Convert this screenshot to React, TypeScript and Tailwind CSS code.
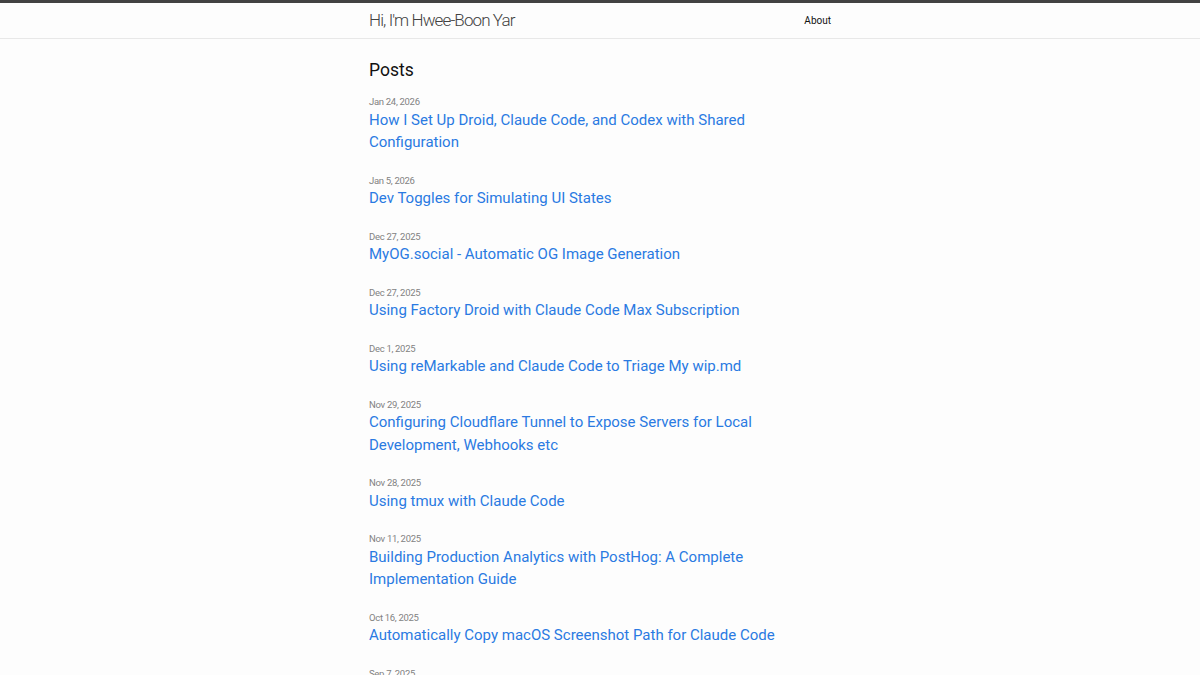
const posts = [
  { date: 'Jan 24, 2026', title: 'How I Set Up Droid, Claude Code, and Codex with Shared Configuration' },
  { date: 'Jan 5, 2026', title: 'Dev Toggles for Simulating UI States' },
  { date: 'Dec 27, 2025', title: 'MyOG.social - Automatic OG Image Generation' },
  { date: 'Dec 27, 2025', title: 'Using Factory Droid with Claude Code Max Subscription' },
  { date: 'Dec 1, 2025', title: 'Using reMarkable and Claude Code to Triage My wip.md' },
  { date: 'Nov 29, 2025', title: 'Configuring Cloudflare Tunnel to Expose Servers for Local Development, Webhooks etc' },
  { date: 'Nov 28, 2025', title: 'Using tmux with Claude Code' },
  { date: 'Nov 11, 2025', title: 'Building Production Analytics with PostHog: A Complete Implementation Guide' },
  { date: 'Oct 16, 2025', title: 'Automatically Copy macOS Screenshot Path for Claude Code' },
  { date: 'Sep 7, 2025', title: 'Running Multiple Claude Code Sessions in Parallel' },
];

export default function App() {
  return (
    <div className="min-h-screen bg-[#fdfdfd] text-[#111] font-['Roboto',sans-serif]">
      <header className="border-t-[3px] border-t-[#424242] border-b border-b-[#e8e8e8]">
        <div className="mx-auto flex h-[35px] w-[462px] items-center justify-between">
          <a href="#" className="text-[17px] font-light tracking-[-0.9px] text-[#424242]">
            Hi, I'm Hwee-Boon Yar
          </a>
          <nav className="-mt-[4px]">
            <a href="#" className="text-[10px] text-[#111]">
              About
            </a>
          </nav>
        </div>
      </header>

      <main className="mx-auto w-[462px] pt-[20px]">
        <h2 className="text-[17.5px] leading-[22px] text-[#111]">Posts</h2>
        <ul className="mt-[13px]">
          {posts.map((p, i) => (
            <li key={i} className="mb-[19px]">
              <span className="block text-[9.5px] leading-[15.5px] tracking-[-0.3px] text-[#828282]">
                {p.date}
              </span>
              <h3 className="-mt-[1px] text-[15px] leading-[22.5px]">
                <a href="#" className="text-[#2a7ae2]">
                  {p.title}
                </a>
              </h3>
            </li>
          ))}
        </ul>
      </main>
    </div>
  );
}
